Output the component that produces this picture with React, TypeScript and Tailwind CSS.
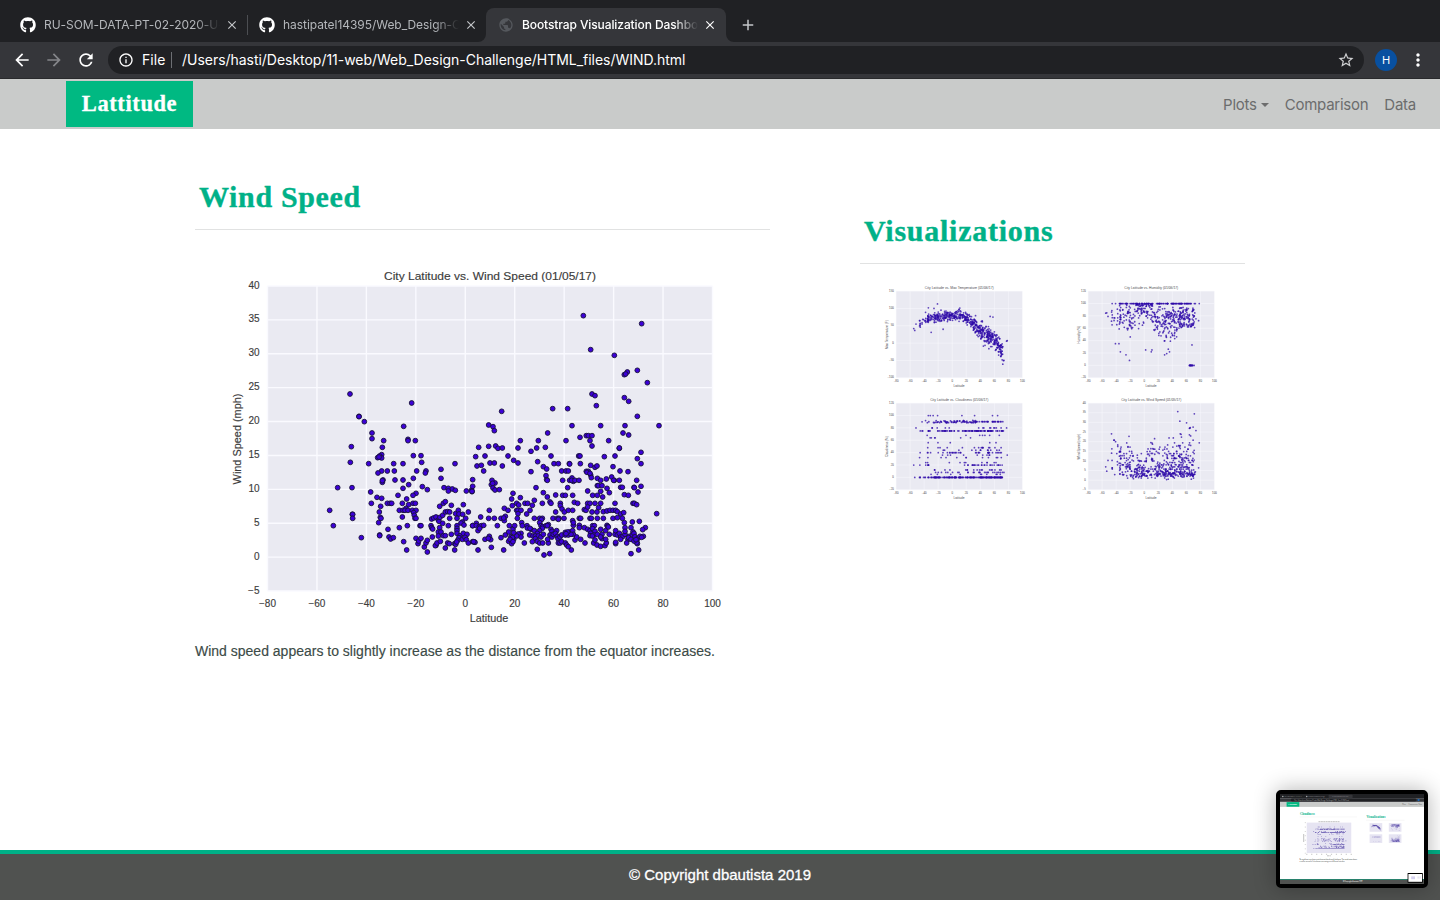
import { FaGithub } from "react-icons/fa";
import {
  MdAdd,
  MdArrowBack,
  MdArrowForward,
  MdClose,
  MdInfoOutline,
  MdMoreVert,
  MdPublic,
  MdRefresh,
  MdStarBorder,
} from "react-icons/md";

type Point = [number, number];

// Plot rectangle in chart units
const LEFT = 267.5;
const TOP = 286;
const WIDTH = 445;
const HEIGHT = 305;

const parse = (s: string, ox: number, oy: number): Point[] =>
  s
    .trim()
    .split(/\s+/)
    .map((p) => {
      const [x, y] = p.split(",").map(Number);
      return [ox + x / 3, oy + y / 3] as Point;
    });

const windTop = `310,167 485,191 332,269 403,286 472,331 442,336 433,344 437,342 502,368 336,402 345,407 433,413`;

const windLeft = `375,-18 560,9 402,49 402,50 418,65 536,79 549,118 549,122 571,122 441,99 441,116 476,122 379,140 472,142
376,187 431,191 506,191 534,191 590,187 565,167 588,167 470,164 458,173 464,168 470,174 690,191 462,171
470,213 487,213 508,213 459,219 575,213 603,213 601,219 648,208 565,235 648,235 472,247 474,240 472,242 510,240 534,240 551,254 592,260 607,269 338,263 381,263 534,265 437,276 573,280 519,286 564,286 456,292 470,295 545,297 657,263 670,265 682,267 691,271 670,273
439,310 487,310 495,310 500,310 532,310 551,314 564,310 571,310 467,319 644,319 655,310 661,305 679,316 715,314 314,331 523,331 534,331 543,325 540,331 549,331 562,331 573,331 463,336 566,338 568,346 532,351 466,352 468,355 570,355 573,355 382,343 383,343 383,355 461,368 325,377 547,377 523,383 489,388 585,377 588,377 618,377 620,383 623,387 464,405 464,407 409,413 492,411 497,417 505,413 536,425 573,415 579,431 581,423 588,415 598,441 545,450 607,456 603,429 607,421 622,411
620,357 626,354 633,351 640,360 642,364 645,352 653,346 653,370 661,336 668,335 674,336 674,355 670,377 644,383 640,396 648,396 655,407 661,407 679,403 640,408 633,436 631,437 636,429 646,424 661,444 689,450 668,429 673,431 689,431 692,341 700,331 702,342 696,355 713,343 722,355 730,336 712,366 708,369 717,375 696,377 696,385 696,392 696,400 705,407 715,400 726,403 702,413 712,418 720,412 724,419 698,421 692,433 695,426 730,429 743,425 748,426 743,377 724,273 740,270 741,275`;

const windRight = `95,34 248,26 293,26 379,17 476,4 502,49 56,75 69,80 73,92 306,77 392,77 465,77 567,77 233,99 459,99 476,105 330,112 349,107 355,107 366,107 360,122 151,122 205,122 288,122 416,122 366,138 26,142 56,139 77,138 84,145 97,144 144,144 200,144 226,142 448,145 448,144 183,154 513,157
45,168 17,170 114,168 243,168 326,168 330,168 403,170 435,168 502,176 131,181 144,189 203,185 21,198 34,196 60,189 73,189 97,198 252,191 265,191 298,191 299,192 331,191 513,191 362,196 375,202 381,198 220,200 230,207 429,200 41,213 183,215 275,213 288,213 295,213 349,214 355,214 351,217 450,213 474,215 362,225 360,220 228,227 230,239 232,241 278,241 8,239 66,241 75,249 64,254 68,250 8,259 6,274 69,264 75,270 88,269 198,263 293,263 299,241 306,234 310,244 305,241 315,241 327,241 382,235 392,241 364,233 409,237 425,231 433,241 431,241 448,241 500,241 382,257 385,257 396,257 411,265 392,274 418,278 353,273 452,262 457,262 492,262 493,263 513,259 504,276 463,284 475,286 129,280 220,278 125,297 151,293 193,301 232,291 257,285 278,286 286,286 308,286 368,286 382,286 398,291 489,310 493,310 500,314 560,341
103,325 114,331 127,317 140,310 146,315 140,331 144,331 153,331 144,341 165,310 173,310 187,316 180,331 170,342 217,310 240,306 243,310 271,310 271,317 276,327 283,336 257,336 295,331 308,331 313,307 323,310 435,310 353,310 360,310 375,310 392,310 386,323 343,329 348,331 353,321 366,336 381,336 400,335 411,333 420,331 429,331 437,331 442,335 452,342 461,338 58,331 32,351 56,355 73,355 93,355 106,349 103,362 101,354 142,355 193,355 209,355 217,355 214,359 249,355 262,355 267,355 265,358 282,355 308,362 328,355 332,355 360,355 364,355 382,355 400,355 429,355 442,353 457,355 487,366 508,364 463,368 483,383 526,383 518,389
8,377 19,370 19,377 28,380 34,377 41,376 24,392 29,385 82,377 118,377 129,387 134,377 155,368 157,377 171,377 172,384 183,388 180,385 193,392 209,368 213,377 218,380 228,377 235,374 217,385 232,377 243,388 246,394 240,405 260,392 209,392 202,400 179,405 189,408 196,408 205,408 213,411 220,403 196,416 202,424 209,429 218,429 187,425 163,429 153,400 145,402 153,411 140,408 131,418 123,410 127,413 131,398 116,396 106,405 93,413 116,424 120,418 125,431 129,425 15,427 45,418 58,409 62,419 55,415 11,425 24,450 64,442 101,450 202,448 222,465 239,461 304,450 483,461 506,450
235,429 233,418 246,411 250,403 256,400 262,409 264,416 270,411 275,405 286,405 295,405 299,396 308,392 310,403 303,403 286,397 293,396 288,401 310,376 310,368 328,376 328,383 343,383 353,388 360,392 368,377 373,377 368,386 375,394 362,400 371,405 360,407 367,408 382,403 396,403 392,388 407,392 411,376 413,379 415,381 418,403 435,403 437,392 442,405 448,400 452,411 459,409 465,403 452,418 437,431 437,427 465,383 465,394 474,418 470,429 478,409 476,413 489,396 487,405 492,400 495,410 504,415 510,409 520,409 515,412 500,425 502,431 500,428 483,418 492,423 498,419 265,429 270,429 275,425 286,429 290,435 295,440 315,420 320,411 332,418 345,429 371,429 375,420 381,435 392,439 405,437 409,429 396,416 392,411 407,418`;

const wind: Point[] = [
  ...parse(windTop, 480, 260),
  ...parse(windLeft, 225, 400),
  ...parse(windRight, 470, 400),
];

const lats = wind.map(([x]) => -80 + ((x - LEFT) / WIDTH) * 180);

function random(seed: number) {
  let s = seed;
  return () => {
    s = (s * 16807) % 2147483647;
    return s / 2147483647;
  };
}

const place = (lat: number, v: number, min: number, max: number): Point => [
  LEFT + ((lat + 80) / 180) * WIDTH,
  TOP + HEIGHT - ((v - min) / (max - min)) * HEIGHT,
];

const curve: Point[] = [
  [-60, 36], [-45, 56], [-35, 69], [-20, 75], [0, 79], [12, 78], [22, 70], [36, 44], [50, 24], [62, 8], [67, -12], [75, -38],
];

function temperature(): Point[] {
  const r = random(71);
  const points = lats.map((lat) => {
    const i = Math.max(1, curve.findIndex((c) => c[0] > lat));
    const [x0, y0] = curve[i - 1];
    const [x1, y1] = curve[i] ?? curve[curve.length - 1];
    const base = y0 + ((lat - x0) / (x1 - x0)) * (y1 - y0);
    const spread = lat > 30 ? 32 : 18;
    const v = lat > 76 ? 5 + 20 * r() : base + (r() + r() - 1) * spread * (r() > 0.93 ? 1.7 : 1);
    return place(lat, v, -100, 150);
  });
  const outliers: Point[] = [
    [-21, 113], [-34, 102], [-26, 100], [-38, 89], [-16, 95], [-30, 31], [-13, 40], [54, 77], [58, 75], [72, -61],
  ];
  return [...points, ...outliers.map(([lat, v]) => place(lat, v, -100, 150))];
}

function humidity(): Point[] {
  const r = random(913);
  const points = lats.map((lat) => {
    let v: number;
    if (lat > 62 && lat < 73 && r() < 0.2) v = 0;
    else if (r() < 0.2) v = 100;
    else if (lat > -13 && lat < 12) v = 100 - 42 * r() * r();
    else if (lat > 48) v = 94 - 34 * r();
    else v = 98 - (lat > 20 ? 60 : 44) * (0.25 * r() + 0.75 * r());
    if (r() < 0.03) v -= 35 * r();
    return place(lat, Math.max(0, v), -20, 120);
  });
  const outliers: Point[] = [
    [-21, 8], [-26, 17], [-34, 22], [-41, 35], [-36, 35], [2, 25], [11, 25], [10, 22], [29, 17], [32, 19], [36, 22], [68, 33],
  ];
  return [...points, ...outliers.map(([lat, v]) => place(lat, v, -20, 120))];
}

function cloudiness(): Point[] {
  const r = random(4211);
  const levels = [80, 80, 68, 64, 56, 48, 48, 44, 44, 40, 36, 36, 32, 24, 12, 12, 8, 8, 5];
  return lats.map((lat) => {
    const k = r();
    let v: number;
    if (k < 0.27) v = 0;
    else if (k < 0.43) v = 75;
    else if (k < 0.61) v = lat > 33 ? 90 : 88 + 4 * r();
    else if (k < 0.67) v = 20;
    else if (k < 0.71) v = 40;
    else if (k < 0.72) v = 100;
    else v = levels[Math.floor(r() * levels.length)];
    return place(lat, v, -20, 120);
  });
}

interface ChartData {
  title: string;
  titleWidth: number;
  yLabel: string;
  ticks: number[];
  points: Point[];
}

interface ChartProps extends ChartData {
  className?: string;
  thumb?: boolean;
}

function Chart({ title, titleWidth, yLabel, ticks, points, className, thumb }: ChartProps) {
  const label = (n: number) => String(n).replace("-", "−");
  const ink = thumb ? "#6c6c70" : "#3c3c3c";
  return (
    <svg viewBox="225 265 500 365" className={className} fontFamily="Liberation Sans, Arial, sans-serif">
      <rect x={LEFT} y={TOP} width={WIDTH} height={HEIGHT} fill="#eaeaf2" />
      <g stroke="#fafaff" strokeWidth={thumb ? 1.6 : 1.4}>
        {Array.from({ length: 10 }, (_, i) => {
          const x = LEFT + (i * WIDTH) / 9;
          return <line key={i} x1={x} x2={x} y1={TOP} y2={TOP + HEIGHT} />;
        })}
        {ticks.map((t, i) => {
          const y = TOP + (i * HEIGHT) / (ticks.length - 1);
          return <line key={t} x1={LEFT} x2={LEFT + WIDTH} y1={y} y2={y} />;
        })}
      </g>
      <g
        fill={thumb ? "#2e0aa8" : "#3c00d8"}
        fillOpacity={thumb ? 0.75 : 1}
        stroke={thumb ? "none" : "#16103a"}
        strokeWidth="0.9"
      >
        {points.map(([x, y], i) => (
          <circle key={i} cx={x} cy={y} r={thumb ? 3.1 : 2.4} />
        ))}
      </g>
      <g fill={ink} stroke={ink} strokeWidth="0.15" fontSize="10">
        <text x="490" y="280" textAnchor="middle" fontSize="11.5" textLength={titleWidth} lengthAdjust="spacingAndGlyphs">
          {title}
        </text>
        {ticks.map((t, i) => (
          <text key={t} x="259.5" y={TOP + 2.5 + (i * HEIGHT) / (ticks.length - 1)} textAnchor="end">
            {label(t)}
          </text>
        ))}
        {Array.from({ length: 10 }, (_, i) => (
          <text key={i} x={LEFT + (i * WIDTH) / 9} y="606.5" textAnchor="middle">
            {label(-80 + i * 20)}
          </text>
        ))}
        <text x="489" y="622" textAnchor="middle" fontSize="10.8">
          Latitude
        </text>
        <text transform="translate(240.5 439) rotate(-90)" textAnchor="middle" fontSize="10.9">
          {yLabel}
        </text>
      </g>
    </svg>
  );
}

const range = (start: number, step: number, count: number) =>
  Array.from({ length: count }, (_, i) => start - step * i);

const tempChart: ChartData = {
  title: "City Latitude vs. Max Temperature (01/06/17)",
  titleWidth: 243,
  yLabel: "Max Temperature (F)",
  ticks: range(150, 50, 6),
  points: temperature(),
};
const humidityChart: ChartData = {
  title: "City Latitude vs. Humidity (01/06/17)",
  titleWidth: 190,
  yLabel: "Humidity (%)",
  ticks: range(120, 20, 8),
  points: humidity(),
};
const cloudChart: ChartData = {
  title: "City Latitude vs. Cloudiness (01/06/17)",
  titleWidth: 205,
  yLabel: "Cloudiness (%)",
  ticks: range(120, 20, 8),
  points: cloudiness(),
};
const windChart: ChartData = {
  title: "City Latitude vs. Wind Speed (01/05/17)",
  titleWidth: 212,
  yLabel: "Wind Speed (mph)",
  ticks: range(40, 5, 10),
  points: wind,
};

const thumbs = [tempChart, humidityChart, cloudChart, windChart];

function TabTitle({ children, active }: { children: string; active?: boolean }) {
  return (
    <span
      className={
        "ml-2 block w-44 overflow-hidden whitespace-nowrap text-[12px] leading-4 [mask-image:linear-gradient(to_right,black_86%,transparent)] " +
        (active ? "font-medium tracking-[-0.1px] text-white" : "tracking-[-0.05px] text-[#b4b7bb]")
      }
    >
      {children}
    </span>
  );
}

function Browser() {
  return (
    <header className="shrink-0 font-[Inter,sans-serif]">
      <div className="flex h-[42px] items-end bg-[#202124]">
        <div className="flex h-[34px] w-[247px] items-center pl-5">
          <FaGithub className="size-4 shrink-0 text-white" />
          <TabTitle>RU-SOM-DATA-PT-02-2020-U-C</TabTitle>
          <MdClose className="ml-[5px] size-3.5 shrink-0 text-[#c4c6c9]" />
        </div>
        <div className="mb-[7px] h-5 w-px bg-[#4c4e52]" />
        <div className="flex h-[34px] w-[238px] items-center pl-[11px]">
          <FaGithub className="size-4 shrink-0 text-white" />
          <TabTitle>hastipatel14395/Web_Design-Challenge</TabTitle>
          <MdClose className="ml-[5px] size-3.5 shrink-0 text-[#c4c6c9]" />
        </div>
        <div className="relative flex h-[34px] w-60 items-center rounded-t-lg bg-[#35363a] pl-3">
          <svg className="absolute bottom-0 -left-2 size-2" viewBox="0 0 8 8">
            <path d="M8 0v8H0a8 8 0 0 0 8-8z" fill="#35363a" />
          </svg>
          <svg className="absolute -right-2 bottom-0 size-2" viewBox="0 0 8 8">
            <path d="M0 0v8h8a8 8 0 0 1-8-8z" fill="#35363a" />
          </svg>
          <MdPublic className="size-4 shrink-0 text-[#55585d]" />
          <TabTitle active>Bootstrap Visualization Dashboard</TabTitle>
          <MdClose className="ml-[5px] size-3.5 shrink-0 text-white" />
        </div>
        <MdAdd className="mb-2 ml-[13px] size-[18px] text-[#c4c6c9]" />
      </div>
      <div className="flex h-[37px] items-center border-b border-[#292a2c] bg-[#35363a] text-white">
        <MdArrowBack className="ml-3 size-5" />
        <MdArrowForward className="ml-3 size-5 text-[#85868a]" />
        <MdRefresh className="ml-3 size-5" />
        <div className="ml-3 flex h-7 w-[1256px] items-center rounded-full bg-[#202124] text-[14px]">
          <MdInfoOutline className="ml-2.5 size-4" />
          <span className="ml-2 w-[24px] -translate-y-px tracking-[0.1px]">File</span>
          <span className="ml-[5px] h-4 w-px bg-[#6d6f73]" />
          <span className="ml-2.5 -translate-y-px tracking-[-0.03px] whitespace-nowrap">
            /Users/hasti/Desktop/11-web/Web_Design-Challenge/HTML_files/WIND.html
          </span>
          <MdStarBorder className="mr-[9px] ml-auto size-[18px] text-[#d0d1d3]" />
        </div>
        <div className="ml-[11px] flex size-[22px] items-center justify-center rounded-full bg-[#0850a0] text-[11px]">H</div>
        <MdMoreVert className="ml-[11px] size-5" />
      </div>
    </header>
  );
}

function Heading({ children, className }: { children: string; className: string }) {
  return (
    <h2
      className={
        "border-b border-[#e1e2e2] pl-1 font-['Liberation_Serif',serif] text-[30px] font-bold whitespace-nowrap text-[#00b188] [-webkit-text-stroke:0.35px_#00b188] " +
        className
      }
    >
      {children}
    </h2>
  );
}

interface MiniPlotProps {
  x: number;
  y: number;
  width: number;
  points: Point[];
  radius: number;
}

function MiniPlot({ x, y, width, points, radius }: MiniPlotProps) {
  const k = width / 500;
  return (
    <g transform={`translate(${x} ${y}) scale(${k}) translate(-225 -265)`}>
      <rect x={LEFT} y={TOP} width={WIDTH} height={HEIGHT} fill="#e6e4f2" />
      <path
        d={points.map(([px, py]) => `M${px - radius} ${py - radius}h${radius * 2}v${radius * 2}h${-radius * 2}z`).join("")}
        fill="#2a1590"
        fillOpacity="0.75"
      />
    </g>
  );
}

function Preview() {
  return (
    <div className="absolute right-3 bottom-3 h-[98px] w-[152px] rounded-[5px] border-4 border-black bg-white shadow-[0_0_22px_rgba(0,0,0,0.3)]">
      <svg viewBox="0 0 1440 900" className="h-[90px] w-36" fontFamily="Inter, sans-serif">
        <rect width="1440" height="900" fill="#fff" />
        <rect width="1440" height="42" fill="#202124" />
        <rect x="486" y="8" width="240" height="34" rx="8" fill="#35363a" />
        <rect y="42" width="1440" height="37" fill="#35363a" />
        <rect x="108" y="46" width="1256" height="28" rx="14" fill="#202124" />
        <g fill="#aaa" fontSize="12">
          <circle cx="28" cy="25" r="8" />
          <circle cx="267" cy="25" r="8" />
          <text x="44" y="29">RU-SOM-DATA-PT-02-2020-U</text>
          <text x="283" y="29">hastipatel14395/Web_Design-</text>
          <text x="522" y="29">Bootstrap Visualization Dash</text>
          <text x="142" y="65" fontSize="14">File | /Users/hasti/Desktop/11-web/Web_Design-Challenge/HTML_files/CLOUD.html</text>
        </g>
        <circle cx="1386" cy="60" r="11" fill="#1769c0" />
        <rect y="79" width="1440" height="50" fill="#c9cbca" />
        <rect x="66" y="81" width="127" height="46" fill="#00b982" />
        <g fontFamily="Liberation Serif, serif" fontWeight="bold">
          <text x="82" y="111" fontSize="22" fill="#fff">Lattitude</text>
          <text x="199" y="206" fontSize="32" fill="#00b188">Cloudiness</text>
          <text x="864" y="240" fontSize="32" fill="#00b188" textLength="190">Visualizations</text>
        </g>
        <g fontSize="16" fill="#666">
          <text x="1222" y="110">Plots</text>
          <text x="1285" y="110">Comparison</text>
          <text x="1384" y="110">Data</text>
        </g>
        <path d="M195 229h575M860 263h385" stroke="#ddd" strokeWidth="2" />
        <MiniPlot x={225} y={265} width={500} points={cloudChart.points} radius={3.2} />
        <g stroke="#888" strokeWidth="5" strokeDasharray="12 37.4">
          <path d="M262 603h460" />
          <path d="M253 283v312" strokeDasharray="8 35.6" />
        </g>
        <path d="M385 277h210M470 618h38" stroke="#999" strokeWidth="6" strokeDasharray="20 4" />
        <path d="M237 400v80" stroke="#999" strokeWidth="6" />
        <MiniPlot x={884} y={285} width={142} points={tempChart.points} radius={5} />
        <MiniPlot x={1076} y={285} width={142} points={humidityChart.points} radius={4} />
        <MiniPlot x={884} y={397} width={142} points={cloudChart.points} radius={3} />
        <MiniPlot x={1076} y={397} width={142} points={windChart.points} radius={4} />
        <g fill="#444" fontSize="15">
          <text x="195" y="656" textLength="575">No significant correlation exists between latitude and cloudiness. The visualization shows</text>
          <text x="195" y="677">a similar spread of cloudiness percentages at different latitudes.</text>
        </g>
        <rect y="850" width="1440" height="50" fill="#505250" />
        <rect y="850" width="1440" height="5" fill="#00b188" />
        <text x="629" y="880" fontSize="15" fill="#fff">© Copyright dbautista 2019</text>
        <rect x="1276" y="790" width="152" height="98" rx="5" />
        <rect x="1284" y="800" width="136" height="78" fill="#fff" />
        <rect x="1312" y="824" width="38" height="28" fill="#d5d0ef" />
        <rect x="1375" y="824" width="13" height="22" fill="#e4e2f1" />
        <rect x="1394" y="824" width="13" height="22" fill="#e4e2f1" />
      </svg>
    </div>
  );
}

export default function App() {
  return (
    <div className="relative flex h-[900px] w-[1440px] flex-col overflow-hidden bg-white font-['Liberation_Sans',Arial,sans-serif]">
      <Browser />
      <nav className="flex h-[50px] shrink-0 items-center bg-[#c9cbca] pr-6 pl-[66px]">
        <div className="flex h-[46px] w-[127px] items-center justify-center bg-[#00b982] pb-px font-['Liberation_Serif',serif] text-[22.5px] font-bold tracking-[0.6px] text-white [-webkit-text-stroke:0.3px_white]">
          Lattitude
        </div>
        <div className="ml-auto flex items-center pt-0.5 font-[Inter,sans-serif] text-[15px] tracking-[-0.25px] text-[#6c6d6d]">
          <span>Plots</span>
          <span className="mr-4 ml-1 border-x-[4.5px] border-t-[4.5px] border-x-transparent" />
          <span className="mr-4">Comparison</span>
          <span>Data</span>
        </div>
      </nav>
      <main className="flex min-h-0 flex-1 pl-[195px]">
        <section className="w-[575px]">
          <Heading className="mt-[46px] h-[55px] leading-[43px] tracking-[0.65px]">Wind Speed</Heading>
          <Chart {...windChart} className="mt-[35px] ml-[30px] h-[365px] w-[500px]" />
          <p className="mt-3 text-[14px] leading-[18px] whitespace-nowrap text-[#3c4b47] [-webkit-text-stroke:0.15px_#3c4b47]">
            Wind speed appears to slightly increase as the distance from the equator increases.
          </p>
        </section>
        <section className="ml-[90px] w-[385px]">
          <Heading className="mt-20 h-[55px] leading-[43px] tracking-[0.75px]">Visualizations</Heading>
          <div className="mt-[21px] ml-[23.5px] grid w-[334px] grid-cols-[142px_142px] justify-between gap-y-2">
            {thumbs.map((c) => (
              <Chart key={c.title} {...c} thumb className="h-[104px] w-[142px]" />
            ))}
          </div>
        </section>
      </main>
      <footer className="flex h-[50px] shrink-0 items-center justify-center border-t-4 border-[#00b188] bg-[#505250] pb-1 text-[15px] text-white [-webkit-text-stroke:0.3px_white]">
        © Copyright dbautista 2019
      </footer>
      <Preview />
    </div>
  );
}
